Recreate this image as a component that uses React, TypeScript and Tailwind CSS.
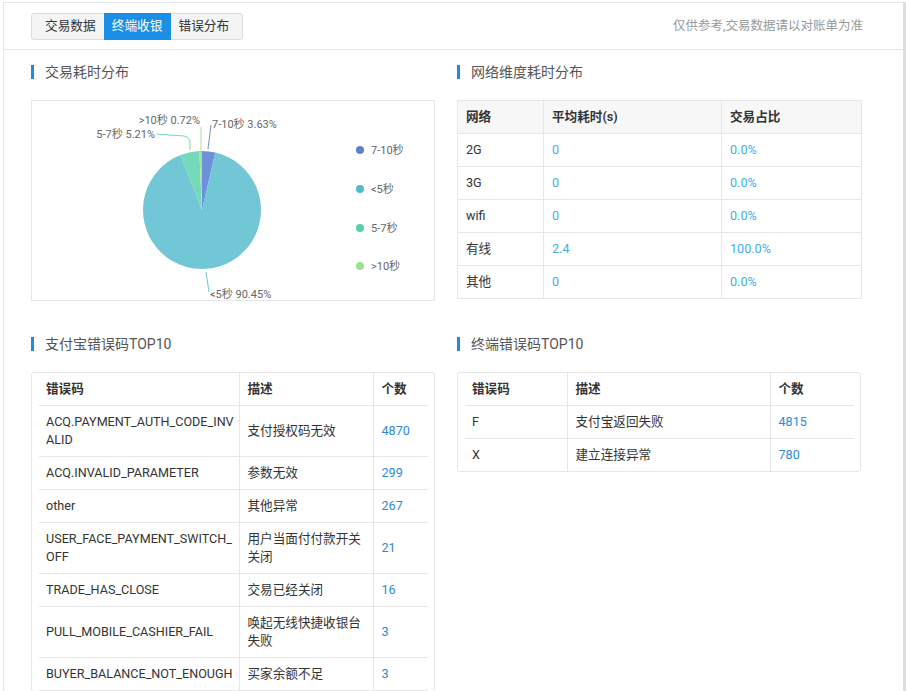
import React from "react";

const slices = [
  { name: "7-10秒", value: 3.63, color: "#6c90da", dot: "#5d80d2" },
  { name: "<5秒", value: 90.45, color: "#71c7d6", dot: "#4fbaca" },
  { name: "5-7秒", value: 5.21, color: "#74d8b9", dot: "#55d1a8" },
  { name: ">10秒", value: 0.72, color: "#a3e29a", dot: "#9ce192" },
];

const networkRows = [
  { net: "2G", avg: "0", pct: "0.0%" },
  { net: "3G", avg: "0", pct: "0.0%" },
  { net: "wifi", avg: "0", pct: "0.0%" },
  { net: "有线", avg: "2.4", pct: "100.0%" },
  { net: "其他", avg: "0", pct: "0.0%" },
];

const alipayErrors = [
  { code: "ACQ.PAYMENT_AUTH_CODE_INVALID", desc: "支付授权码无效", count: 4870 },
  { code: "ACQ.INVALID_PARAMETER", desc: "参数无效", count: 299 },
  { code: "other", desc: "其他异常", count: 267 },
  { code: "USER_FACE_PAYMENT_SWITCH_OFF", desc: "用户当面付付款开关关闭", count: 21 },
  { code: "TRADE_HAS_CLOSE", desc: "交易已经关闭", count: 16 },
  { code: "PULL_MOBILE_CASHIER_FAIL", desc: "唤起无线快捷收银台失败", count: 3 },
  { code: "BUYER_BALANCE_NOT_ENOUGH", desc: "买家余额不足", count: 3 },
];

const terminalErrors = [
  { code: "F", desc: "支付宝返回失败", count: 4815 },
  { code: "X", desc: "建立连接异常", count: 780 },
];

function SectionTitle({ children }: { children: React.ReactNode }) {
  return (
    <div className="flex h-[14px] items-center">
      <span className="h-[14px] w-[3px] bg-[#1e88e5]" />
      <span className="ml-[11px] text-[14px] leading-[14px] text-[#555]">{children}</span>
    </div>
  );
}

function PieChart() {
  const cx = 170;
  const cy = 109;
  const r = 59;
  const total = slices.reduce((s, x) => s + x.value, 0);
  const pt = (deg: number) => {
    const a = (deg * Math.PI) / 180;
    return [cx + r * Math.sin(a), cy - r * Math.cos(a)];
  };
  let start = 0;
  const paths = slices.map((s) => {
    const sweep = (s.value / total) * 360;
    const [x0, y0] = pt(start);
    const [x1, y1] = pt(start + sweep);
    const large = sweep > 180 ? 1 : 0;
    const d = `M${cx} ${cy} L${x0} ${y0} A${r} ${r} 0 ${large} 1 ${x1} ${y1} Z`;
    start += sweep;
    return <path key={s.name} d={d} fill={s.color} />;
  });

  return (
    <svg width="402" height="199" viewBox="0 0 402 199" className="block">
      {paths}
      {/* leader lines */}
      <polyline points="176,48 179,24" fill="none" stroke="#6c90da" strokeWidth="1" />
      <polyline points="169,50 169,26" fill="none" stroke="#a3e29a" strokeWidth="1" />
      <path d="M124 33 L152 35 Q158 36 158 42 L158 49" fill="none" stroke="#74d8b9" strokeWidth="1" />
      <polyline points="174,171 177,191" fill="none" stroke="#71c7d6" strokeWidth="1" />
      <g fontFamily="Roboto, 'Noto Sans CJK SC', sans-serif" fontSize="11" fill="#666">
        <text x="180" y="27">7-10秒 3.63%</text>
        <text x="168" y="23" textAnchor="end">&gt;10秒 0.72%</text>
        <text x="123" y="37" textAnchor="end">5-7秒 5.21%</text>
        <text x="178" y="197">&lt;5秒 90.45%</text>
      </g>
      <g fontFamily="Roboto, 'Noto Sans CJK SC', sans-serif" fontSize="11" fill="#666">
        {slices.map((s, i) => {
          const y = [49, 88, 127, 165][i];
          return (
            <g key={s.name}>
              <circle cx="328" cy={y} r="4" fill={s.dot} />
              <text x="339" y={y + 4}>
                {s.name}
              </text>
            </g>
          );
        })}
      </g>
    </svg>
  );
}

function NetworkTable() {
  return (
    <table className="w-[404px] table-fixed border-collapse text-[12.6px] text-[#333]">
      <colgroup>
        <col className="w-[86px]" />
        <col className="w-[178px]" />
        <col className="w-[140px]" />
      </colgroup>
      <thead>
        <tr className="h-[33px] bg-[#f7f7f7]">
          <th className="border border-[#e6e6e6] pl-[8px] text-left font-semibold">网络</th>
          <th className="border border-[#e6e6e6] pl-[8px] text-left font-semibold">平均耗时(s)</th>
          <th className="border border-[#e6e6e6] pl-[8px] text-left font-semibold">交易占比</th>
        </tr>
      </thead>
      <tbody>
        {networkRows.map((r) => (
          <tr key={r.net} className="h-[33px]">
            <td className="border border-[#e6e6e6] pl-[8px]">{r.net}</td>
            <td className="border border-[#e6e6e6] pl-[8px] text-[#3fb0e6]">{r.avg}</td>
            <td className="border border-[#e6e6e6] pl-[8px] text-[#3fb0e6]">{r.pct}</td>
          </tr>
        ))}
      </tbody>
    </table>
  );
}

function ErrorTable({
  rows,
  cols,
  lastBorder,
}: {
  rows: { code: string; desc: string; count: number }[];
  cols: [string, string, string];
  lastBorder?: boolean;
}) {
  return (
    <div className="rounded-[3px] border border-[#e6e6e6] pl-[7px] pr-[6px]">
      <table className="w-full table-fixed border-collapse text-[12.6px] leading-[18px] text-[#333]">
        <colgroup>
          <col className={cols[0]} />
          <col className={cols[1]} />
          <col className={cols[2]} />
        </colgroup>
        <thead>
          <tr className="border-b border-[#e6e6e6]">
            <th className="py-[7px] pl-[7px] text-left font-semibold">错误码</th>
            <th className="border-l border-[#e6e6e6] py-[7px] pl-[8px] text-left font-semibold">描述</th>
            <th className="border-l border-[#e6e6e6] py-[7px] pl-[8px] text-left font-semibold">个数</th>
          </tr>
        </thead>
        <tbody>
          {rows.map((r, i) => (
            <tr
              key={r.code}
              className={i < rows.length - 1 || lastBorder ? "border-b border-[#e6e6e6]" : ""}
            >
              <td className="py-[7px] pl-[7px] pr-[4px] align-middle break-all">{r.code}</td>
              <td className="border-l border-[#e6e6e6] py-[7px] pl-[8px] pr-[6px] align-middle break-all">
                {r.desc}
              </td>
              <td className="border-l border-[#e6e6e6] py-[7px] pl-[8px] align-middle text-[#2d8ad6]">
                {r.count}
              </td>
            </tr>
          ))}
        </tbody>
      </table>
    </div>
  );
}

export default function App() {
  return (
    <div className="h-[691px] overflow-hidden bg-white pl-[3px] pt-[2px] font-[Roboto,'Noto_Sans_CJK_SC',sans-serif]">
      <div className="min-h-[700px] w-[903px] border-l border-t border-r-[3px] border-[#e6e6e6] border-r-[#dcdce4]">
        {/* Header */}
        <div className="flex h-[47px] items-center justify-between border-b border-[#e6e6e6] pl-[27px] pr-[40px]">
          <div className="flex h-[27px] items-stretch rounded-[3px] border border-[#dcdcdc] bg-[#f4f4f4] px-[5px] text-[12.7px]">
            <button className="px-[8px] text-[#333]">交易数据</button>
            <button className="-my-px bg-[#1b8fe6] px-[8px] text-white">终端收银</button>
            <button className="px-[8px] text-[#333]">错误分布</button>
          </div>
          <span className="text-[12.5px] text-[#999]">仅供参考,交易数据请以对账单为准</span>
        </div>

        {/* Body */}
        <div className="grid grid-cols-[404px_404px] gap-x-[22px] pl-[27px]">
          <div className="pt-[15px]">
            <SectionTitle>交易耗时分布</SectionTitle>
            <div className="mt-[21px] h-[201px] w-[404px] border border-[#e6e6e6]">
              <PieChart />
            </div>
          </div>
          <div className="pt-[15px]">
            <SectionTitle>网络维度耗时分布</SectionTitle>
            <div className="mt-[21px]">
              <NetworkTable />
            </div>
          </div>

          <div className="pt-[36px]">
            <SectionTitle>支付宝错误码TOP10</SectionTitle>
            <div className="mt-[21px]">
              <ErrorTable
                rows={alipayErrors}
                cols={["w-[200px]", "w-[134px]", "w-[55px]"]}
                lastBorder
              />
            </div>
          </div>
          <div className="pt-[36px]">
            <SectionTitle>终端错误码TOP10</SectionTitle>
            <div className="mt-[21px]">
              <ErrorTable rows={terminalErrors} cols={["w-[102px]", "w-[203px]", "w-[84px]"]} />
            </div>
          </div>
        </div>
      </div>
    </div>
  );
}
